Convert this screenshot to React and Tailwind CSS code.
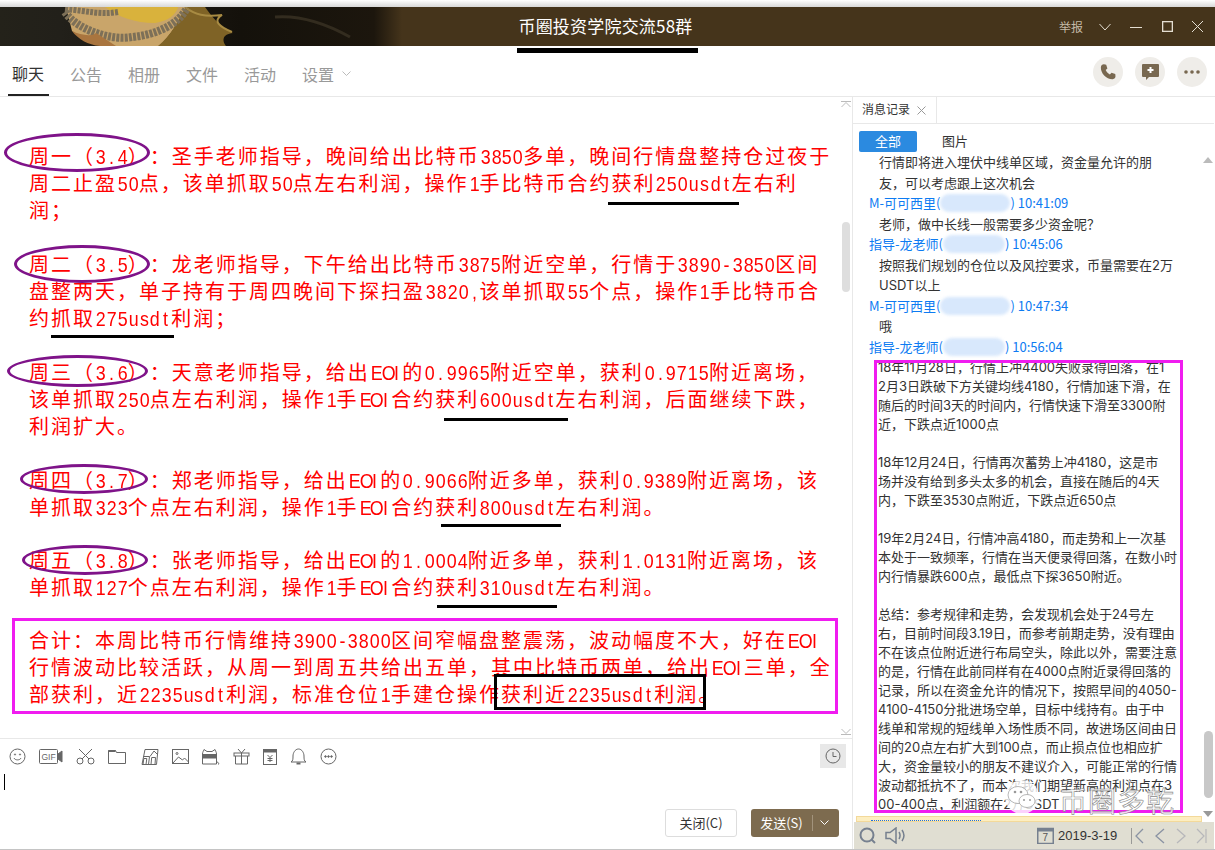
import React from "react";

const CJK = "font-['Noto_Sans_CJK_SC','Liberation_Sans',sans-serif]";
const MSG = "font-['Inter','Noto_Sans_CJK_SC',sans-serif]";

function Header() {
  return (
    <div className="relative h-[39px] bg-[#45341b] flex items-center justify-center overflow-hidden">
      <svg className="absolute left-0 top-0" width="402" height="39" viewBox="0 0 402 39">
        <defs>
          <linearGradient id="fade" x1="0" x2="1">
            <stop offset="0" stopColor="#24221a" />
            <stop offset="0.15" stopColor="#22201a" />
            <stop offset="0.6" stopColor="#14110b" />
            <stop offset="0.93" stopColor="#1c160d" />
            <stop offset="1" stopColor="#45341b" />
          </linearGradient>
        </defs>
        <rect width="402" height="39" fill="url(#fade)" />
        <path d="M72 24 C85 34 100 39 112 39 L160 39 C166 32 176 22 186 0 L66 0 Z" fill="#c9a56a" />
        <path d="M105 0 L178 0 C176 8 168 14 155 16 C135 16 118 10 105 0 Z" fill="#d9b23c" />
        <path d="M158 39 C170 30 178 14 186 0 L205 0 C212 10 222 22 233 26 C222 27 222 34 226 39 Z" fill="#7f6326" />
        <path d="M185 0 C195 8 205 10 222 8 C212 14 220 20 232 25" fill="none" stroke="#a88b43" strokeWidth="2" />
        <path d="M65 5 C76 22 110 34 132 30 C155 28 178 18 187 1" fill="none" stroke="#7d7058" strokeWidth="8" strokeDasharray="3 1.2" />
        <path d="M65 2 C88 4 100 8 118 5" fill="none" stroke="#7d7058" strokeWidth="6" strokeDasharray="3 1.2" />
        <path d="M72 24 C80 28 92 30 96 26 L116 39 L100 39 C88 38 78 32 72 24 Z" fill="#a9753f" />
        <path d="M275 10 C300 8 325 16 350 30" fill="none" stroke="#332c1f" strokeWidth="3" />
      </svg>
      <div className={`relative text-[17px] tracking-[.2px] text-white -mt-[1px] -ml-[4px] ${CJK}`}>币圈投资学院交流58群</div>
      <div className="absolute right-0 top-0 h-full flex items-center text-[#e4ded2]">
        <span className={`text-[12px] mr-[16px] text-[#c4baa8] ${CJK}`}>举报</span>
        <svg className="mr-[19px]" width="12" height="8" viewBox="0 0 12 8" fill="none" stroke="currentColor"><path d="M.5 1l5.500 6 5.500-6" /></svg>
        <svg className="mr-[20px]" width="12" height="12" viewBox="0 0 12 12" fill="none" stroke="currentColor"><path d="M0 6.500h12" /></svg>
        <svg className="mr-[19px]" width="11" height="11" viewBox="0 0 11 11" fill="none" stroke="currentColor"><rect x=".65" y=".65" width="9.700" height="9.700" strokeWidth="1.300" /></svg>
        <svg className="mr-[12px]" width="11" height="11" viewBox="0 0 11 11" fill="none" stroke="currentColor"><path d="M0 0l11 11M11 0L0 11" /></svg>
      </div>
    </div>
  );
}

function Round({ children }) {
  return <div className="w-[30px] h-[30px] rounded-full bg-[#efede9] flex items-center justify-center">{children}</div>;
}

function Tabs() {
  const items = ["公告", "相册", "文件", "活动"];
  return (
    <div className={`h-[51px] border-b border-[#e8e8e8] flex items-end pl-[8px] relative ${CJK}`}>
      <div className="absolute left-[517px] top-[2px] w-[181px] h-[5px] bg-black" />
      <div className="h-[50px] w-[41px] pl-[4px] pt-[5px] border-b-2 border-[#222] flex items-center text-[16px] text-[#333]">聊天</div>
      {items.map((t, i) => (
        <div key={t} className={`h-[50px] pt-[5px] w-[32px] flex items-center text-[16px] text-[#999] ${i === 0 ? "ml-[21px]" : "ml-[26px]"}`}>{t}</div>
      ))}
      <div className="h-[50px] pt-[5px] ml-[26px] flex items-center text-[16px] text-[#999]">
        设置
        <svg className="ml-[8px]" width="9" height="6" viewBox="0 0 9 6" fill="none" stroke="#bbb"><path d="M.5.5l4 4 4-4" /></svg>
      </div>
      <div className="ml-auto self-center flex gap-[12px] mr-[8px] mt-[1px]">
        <Round>
          <svg width="18" height="18" viewBox="0 0 24 24" fill="#786850"><path d="M6.600 1.800l3 .4 1.600 5-2.300 2.200c1 2.500 3 4.600 5.600 5.800l2.200-2.200 5 1.500.3 3.300c.1 1.800-1.500 3.600-3.700 3.900C10 22 2 13.500 2.500 5.600 2.700 3.500 4.500 1.700 6.600 1.800z" /></svg>
        </Round>
        <Round>
          <svg width="19" height="18" viewBox="0 0 19 18"><path d="M2 1h15a1 1 0 0 1 1 1v11a1 1 0 0 1-1 1H8l-3 3v-3H2a1 1 0 0 1-1-1V2a1 1 0 0 1 1-1z" fill="#786850" /><path d="M9.500 4v6M6.500 7h6" stroke="#fff" strokeWidth="2" /></svg>
        </Round>
        <Round>
          <svg width="16" height="4" viewBox="0 0 16 4" fill="#786850"><circle cx="2" cy="2" r="1.800" /><circle cx="8" cy="2" r="1.800" /><circle cx="14" cy="2" r="1.800" /></svg>
        </Round>
      </div>
    </div>
  );
}

function Rich({ text }) {
  const runs = text.match(/[\x20-\x7e]+|[^\x20-\x7e]+/g) || [];
  return runs.map((run, i) =>
    /^[\x20-\x7e]/.test(run) ? (
      [...run].map((c, j) => (
        <span key={`${i}-${j}`} className="inline-block w-[10.9px] text-center text-[21px] scale-x-[.85] font-['Liberation_Sans',sans-serif]">{c}</span>
      ))
    ) : (
      <span key={i} className="tracking-[2px]">{run}</span>
    )
  );
}

function Para({ lines, className = "" }) {
  return (
    <div className={className}>
      {lines.map((l) => (
        <div key={l} className="h-[27px] leading-[27px] whitespace-nowrap"><Rich text={l} /></div>
      ))}
    </div>
  );
}

function Chat() {
  const ring = "absolute rounded-[50%] border-[3px] border-[#7f1389]";
  const bar = "absolute h-[3px] bg-black";
  return (
    <div className="relative h-[641px] overflow-hidden">
      <div className={`pl-[29px] pt-[45px] text-[20px] text-[#f00] flex flex-col ${CJK}`}>
        <Para lines={["周一（3.4）：圣手老师指导，晚间给出比特币3850多单，晚间行情盘整持仓过夜于", "周二止盈50点，该单抓取50点左右利润，操作1手比特币合约获利250usdt左右利", "润；"]} />
        <Para className="mt-[27px]" lines={["周二（3.5）：龙老师指导，下午给出比特币3875附近空单，行情于3890-3850区间", "盘整两天，单子持有于周四晚间下探扫盈3820,该单抓取55个点，操作1手比特币合", "约抓取275usdt利润；"]} />
        <Para className="mt-[27px]" lines={["周三（3.6）：天意老师指导，给出EOI的0.9965附近空单，获利0.9715附近离场，", "该单抓取250点左右利润，操作1手EOI合约获利600usdt左右利润，后面继续下跌，", "利润扩大。"]} />
        <Para className="mt-[27px]" lines={["周四（3.7）：郑老师指导，给出EOI的0.9066附近多单，获利0.9389附近离场，该", "单抓取323个点左右利润，操作1手EOI合约获利800usdt左右利润。"]} />
        <Para className="mt-[26px]" lines={["周五（3.8）：张老师指导，给出EOI的1.0004附近多单，获利1.0131附近离场，该", "单抓取127个点左右利润，操作1手EOI合约获利310usdt左右利润。"]} />
        <div className="-ml-[17px] mt-[18px] w-[826px] h-[96px] border-[3px] border-[#f01cf0] pl-[14px] pt-[5px] relative">
          <Para lines={["合计：本周比特币行情维持3900-3800区间窄幅盘整震荡，波动幅度不大，好在EOI", "行情波动比较活跃，从周一到周五共给出五单，其中比特币两单，给出EOI三单，全", "部获利，近2235usdt利润，标准仓位1手建仓操作获利近2235usdt利润。"]} />
          <div className="absolute left-[479px] top-[53px] w-[212px] h-[36px] border-[3px] border-black" />
        </div>
      </div>
      <div className={`${ring} left-[4px] top-[36px] w-[146px] h-[39px]`} />
      <div className={`${ring} left-[14px] top-[148px] w-[136px] h-[38px]`} />
      <div className={`${ring} left-[7px] top-[258px] w-[141px] h-[32px]`} />
      <div className={`${ring} left-[20px] top-[367px] w-[128px] h-[30px]`} />
      <div className={`${ring} left-[22px] top-[448px] w-[126px] h-[30px]`} />
      <div className={`${bar} left-[608px] top-[105px] w-[131px]`} />
      <div className={`${bar} left-[51px] top-[238px] w-[123px]`} />
      <div className={`${bar} left-[444px] top-[321px] w-[124px]`} />
      <div className={`${bar} left-[441px] top-[427px] w-[120px]`} />
      <div className={`${bar} left-[437px] top-[508px] w-[120px]`} />
      <svg className="absolute left-[841px] top-[4px]" width="10" height="7" viewBox="0 0 10 7" fill="none" stroke="#bbb"><path d="M0 .5h10M.5 6L5 1.500 9.500 6" /></svg>
      <div className="absolute left-[842px] top-[125px] w-[8px] h-[70px] rounded bg-[#dedede]" />
      <svg className="absolute left-[841px] top-[631px]" width="10" height="7" viewBox="0 0 10 7" fill="none" stroke="#bbb"><path d="M0 6.500h10M.5 1L5 5.500 9.500 1" /></svg>
    </div>
  );
}

function ToolIcons() {
  const s = { fill: "none", stroke: "#666", strokeWidth: 1 };
  return (
    <div className="h-[35px] flex items-center pl-[9px] gap-[13px]">
      <svg width="17" height="17" viewBox="0 0 17 17" {...s}><circle cx="8.500" cy="8.500" r="7.500" /><path d="M5 10c1 2.500 6 2.500 7 0" /><circle cx="6" cy="6.500" r=".6" /><circle cx="11" cy="6.500" r=".6" /></svg>
      <svg width="24" height="15" viewBox="0 0 24 15" {...s}><rect x=".5" y=".5" width="18" height="14" rx="1" /><path d="M19 5l4-3v11l-4-3z" fill="#666" /><text x="2.500" y="11" fontSize="8.500" fill="#666" stroke="none" fontFamily="Liberation Sans">GIF</text></svg>
      <svg width="19" height="17" viewBox="0 0 19 17" {...s}><circle cx="4" cy="13" r="3" /><circle cx="15" cy="13" r="3" /><path d="M6 11L16 1M13 11L3 1" /></svg>
      <svg width="18" height="15" viewBox="0 0 18 15" {...s}><path d="M.5 14.500V1.500h7l1 2h9v11z" /><path d="M.5 2h7" strokeWidth="2" /></svg>
      <svg className="ml-[2px]" width="18" height="16" viewBox="0 0 18 16" {...s}><path d="M4 .5h13L15.500 15.500H1zM2.500 7.500h6l-1 8M2 15.500l.8-6h3L5 15.500M10 15.500l.7-7h3.800L14 15.500M9 7.500L13 2l3 3" /></svg>
      <svg width="17" height="15" viewBox="0 0 17 15" {...s}><rect x=".5" y=".5" width="16" height="14" /><path d="M1 14l5.500-6 4 3 2-2 4 4" /><circle cx="5" cy="4.500" r="1" /></svg>
      <svg width="18" height="16" viewBox="0 0 18 16" {...s}><path d="M.5 15V5C.5 3 2 1 2 .5l3 2h5l3-2c0 .5 1.500 2.500 1.500 4.500v10z" /><path d="M.5 5.500h14V9H.5z" fill="#666" /><path d="M15 13c1.500.5 2 1 1.500 2.500" /></svg>
      <svg width="17" height="17" viewBox="0 0 17 17" {...s}><rect x="1" y="5" width="15" height="3" /><path d="M2.500 8v8h12V8M8.500 5v11M5 1l3.500 4L12 1" /></svg>
      <svg width="14" height="16" viewBox="0 0 14 16" {...s}><rect x=".5" y=".5" width="13" height="15" /><path d="M.5 2h13" strokeWidth="3" /><path d="M4.500 6L7 8.500 9.500 6M7 8.500v4.500M4.500 9.500h5M4.500 11.500h5" /></svg>
      <svg width="17" height="17" viewBox="0 0 17 17" {...s}><path d="M1 14c2-1 2-3 2-6 0-3 2-7 5.500-7S14 5 14 8c0 3 0 5 2 6z" /><path d="M6.500 15.500h4" strokeWidth="2" /></svg>
      <svg width="17" height="17" viewBox="0 0 17 17" {...s}><circle cx="8.500" cy="8.500" r="7.500" /><circle cx="5.500" cy="8.500" r=".8" fill="#666" /><circle cx="8.500" cy="8.500" r=".8" fill="#666" /><circle cx="11.500" cy="8.500" r=".8" fill="#666" /></svg>
    </div>
  );
}

function Input() {
  return (
    <div className={`relative h-[111px] border-t border-[#e8e8e8] ${CJK}`}>
      <ToolIcons />
      <div className="absolute left-[820px] top-[5px] w-[26px] h-[24px] bg-[#e8e8e8] flex items-center justify-center">
        <svg width="16" height="16" viewBox="0 0 16 16" fill="none" stroke="#666"><circle cx="8" cy="8" r="7" /><path d="M8 4v4.500h3.500" /></svg>
      </div>
      <div className="ml-[4px] w-[1px] h-[16px] bg-black" />
      <div className="absolute right-[13px] bottom-[12px] flex items-center gap-[14px]">
        <div className="w-[72px] h-[28px] border border-[#ddd] rounded-[3px] flex items-center justify-center text-[13px] text-[#333]">关闭(C)</div>
        <div className="w-[88px] h-[28px] bg-[#7d6b4f] rounded-[3px] flex items-center text-[13px] text-white">
          <span className="w-[61px] text-center">发送(S)</span>
          <span className="w-[1px] h-[16px] bg-[#a2937c]" />
          <svg className="ml-[7px]" width="9" height="6" viewBox="0 0 9 6" fill="none" stroke="#fff"><path d="M.5.5l4 4 4-4" /></svg>
        </div>
      </div>
    </div>
  );
}

function Sender({ name, time, blur }) {
  return (
    <div className={`h-[20.500px] leading-[20.500px] pl-[16px] text-[#0d7bf2] whitespace-nowrap flex items-center ${CJK}`}>
      {name}(<span className={`inline-block h-[18px] rounded-full bg-[#d8e8fc] blur-[1.500px] ${blur}`} />)&nbsp;{time}
    </div>
  );
}
function Msg({ lines }) {
  return lines.map((l) => (
    <div key={l} className="h-[20.500px] leading-[20.500px] pl-[26px] text-[#333] whitespace-nowrap">{l}</div>
  ));
}

function Side() {
  const box = [
    "18年11月28日，行情上冲4400失败录得回落，在1",
    "2月3日跌破下方关键均线4180，行情加速下滑，在",
    "随后的时间3天的时间内，行情快速下滑至3300附",
    "近，下跌点近1000点",
    "",
    "18年12月24日，行情再次蓄势上冲4180，这是市",
    "场并没有给到多头太多的机会，直接在随后的4天",
    "内，下跌至3530点附近，下跌点近650点",
    "",
    "19年2月24日，行情冲高4180，而走势和上一次基",
    "本处于一致频率，行情在当天便录得回落，在数小时",
    "内行情暴跌600点，最低点下探3650附近。",
    "",
    "总结：参考规律和走势，会发现机会处于24号左",
    "右，目前时间段3.19日，而参考前期走势，没有理由",
    "不在该点位附近进行布局空头，除此以外，需要注意",
    "的是，行情在此前同样有在4000点附近录得回落的",
    "记录，所以在资金允许的情况下，按照早间的4050-",
    "4100-4150分批进场空单，目标中线持有。由于中",
    "线单和常规的短线单入场性质不同，故进场区间由日",
    "间的20点左右扩大到100点，而止损点位也相应扩",
    "大，资金量较小的朋友不建议介入，可能正常的行情",
    "波动都抵抗不了，而本次我们期望新高的利润点在3",
    "00-400点，利润额在2万USDT",
  ];
  return (
    <div className={`relative w-[362px] shrink-0 border-l border-[#e8e8e8] flex flex-col text-[13px] ${MSG}`}>
      <div className="h-[27px] border-b border-[#e8e8e8] flex items-stretch">
        <div className="w-[84px] border-r border-[#e8e8e8] flex items-center pl-[9px] text-[12px] text-[#333]">
          消息记录
          <svg className="ml-[7px]" width="9" height="9" viewBox="0 0 9 9" stroke="#999" fill="none"><path d="M.5.5l8 8M8.500.5l-8 8" /></svg>
        </div>
      </div>
      <div className="h-[29px] pt-[6px] flex items-center pl-[6px]">
        <div className="w-[58px] h-[21px] rounded-[2px] bg-[#2b8ae0] text-white flex items-center justify-center">全部</div>
        <div className="ml-[25px] text-[#333]">图片</div>
      </div>
      <div className="h-[208px] overflow-hidden -mt-[1px]">
        <Msg lines={["行情即将进入埋伏中线单区域，资金量允许的朋", "友，可以考虑跟上这次机会"]} />
        <Sender name="M-可可西里" time="10:41:09" blur="w-[70px]" />
        <Msg lines={["老师，做中长线一般需要多少资金呢？"]} />
        <Sender name="指导-龙老师" time="10:45:06" blur="w-[62px]" />
        <Msg lines={["按照我们规划的仓位以及风控要求，币量需要在2万", "USDT以上"]} />
        <Sender name="M-可可西里" time="10:47:34" blur="w-[70px]" />
        <Msg lines={["哦"]} />
        <Sender name="指导-龙老师" time="10:56:04" blur="w-[62px]" />
      </div>
      <div className="ml-[21px] w-[309px] h-[453px] border-[3px] border-[#f01cf0] overflow-hidden pl-[1px]">
        <div className="-mt-[5.500px]">
          {box.map((l, i) => (
            <div key={i} className="h-[19px] leading-[19px] text-[#333] whitespace-nowrap">{l || "\u00a0"}</div>
          ))}
        </div>
      </div>
      <div className="absolute right-[1px] top-[60px] w-[10px] h-[660px] flex flex-col items-center">
        <svg width="10" height="6" viewBox="0 0 10 6" fill="#bbb"><path d="M5 0l5 6H0z" /></svg>
        <div className="mt-auto w-[9px] h-[67px] rounded-full bg-[#c8c8c8]" />
        <svg className="mt-[13px]" width="10" height="6" viewBox="0 0 10 6" fill="#999"><path d="M5 6l5-6H0z" /></svg>
      </div>
      <div className="mt-[3px] ml-[3px] mr-[12px] h-[6px] bg-[#fdeec0] border border-[#f3d99a] pl-[14px] flex items-end">
        <div className="w-[110px] border-b border-dotted border-[#1d6fe0]" />
      </div>
      <div className="ml-[1px] h-[27px] bg-[#e0ded2] flex items-center pl-[5px]">
        <svg width="17" height="17" viewBox="0 0 17 17" fill="none" stroke="#76808f" strokeWidth="2"><circle cx="8" cy="8" r="6.500" /><path d="M12.500 12.500l3.500 3.500" /></svg>
        <svg className="ml-[9px]" width="21" height="17" viewBox="0 0 21 17" fill="none" stroke="#76808f" strokeWidth="1.500"><path d="M1 5.500h4l6-4.500v15l-6-4.500H1zM14 5c1.500 2.500 1.500 4.500 0 7M17 3c2.500 3.500 2.500 7.500 0 11" /></svg>
        <svg className="ml-[131px]" width="17" height="17" viewBox="0 0 17 17"><rect x=".75" y="1.500" width="15.500" height="15" fill="none" stroke="#76808f" strokeWidth="1.500" /><rect x=".75" y="1" width="15.500" height="3.500" fill="#76808f" /><text x="5.500" y="14" fontSize="10" fill="#555" fontFamily="Liberation Sans">7</text></svg>
        <span className="ml-[4px] text-[13px] text-[#333] font-['Liberation_Sans',sans-serif]">2019-3-19</span>
        <span className="ml-[14px] w-[1px] h-[16px] bg-[#9a9a98]" />
        <svg className="ml-[2px]" width="10" height="16" viewBox="0 0 10 16" fill="none" stroke="#8a93a3"><path d="M9 1L2 8l7 7" strokeWidth="1.300" /></svg>
        <svg className="ml-[11px]" width="10" height="16" viewBox="0 0 10 16" fill="none" stroke="#8a93a3"><path d="M9 1L1 8l8 7" strokeWidth="1.300" /></svg>
        <svg className="ml-[11px]" width="10" height="16" viewBox="0 0 10 16" fill="none" stroke="#b7b7ba"><path d="M1 1l8 7-8 7" strokeWidth="1.300" /></svg>
        <svg className="ml-[10px]" width="11" height="16" viewBox="0 0 11 16" fill="none" stroke="#b7b7ba"><path d="M1 1l7 7-7 7M10 1v14" strokeWidth="1.200" /></svg>
      </div>
      <div className="absolute left-[147px] bottom-[34px] flex items-end pointer-events-none">
        <svg width="44" height="35" viewBox="0 0 44 35">
          <circle cx="22" cy="17" r="17" fill="#fff" fillOpacity=".8" />
          <ellipse cx="18" cy="15" rx="10" ry="8.500" fill="#fff" stroke="#999" strokeWidth=".7" />
          <ellipse cx="27" cy="21" rx="8" ry="6.500" fill="#fff" stroke="#999" strokeWidth=".7" />
          <circle cx="15" cy="12" r="1.300" fill="#999" /><circle cx="21" cy="12" r="1.300" fill="#999" />
          <circle cx="24" cy="20" r="1" fill="#999" /><circle cx="30" cy="20" r="1" fill="#999" />
        </svg>
        <span className={`ml-[15px] text-[28px] leading-[30px] text-[#ffffffcc] [-webkit-text-stroke:0.6px_#888] whitespace-nowrap tracking-[1px] ${CJK}`}>币圈多乾</span>
      </div>
    </div>
  );
}

export default function App() {
  return (
    <div className="w-[1215px] h-[850px] bg-white overflow-hidden flex flex-col [text-spacing-trim:space-all]">
      <div className="h-[7px] bg-gradient-to-b from-[#ffffff] to-[#d8d8d8]" />
      <Header />
      <Tabs />
      <div className="flex h-[753px] border-b border-[#c4c4c4]">
        <div className="w-[852px] shrink-0 flex flex-col">
          <Chat />
          <Input />
        </div>
        <Side />
      </div>
    </div>
  );
}
